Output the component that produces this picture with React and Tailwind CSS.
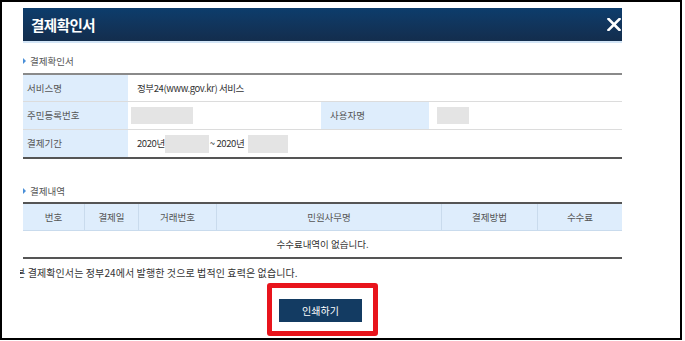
const font = { fontFamily: '"Noto Sans CJK KR", "Noto Sans", sans-serif' };

const Blur = ({ className }) => <span className={`inline-block bg-[#e4e4e4] ${className}`} />;

const SectionLabel = ({ children, className }) => (
    <div className={`flex items-center h-[14px] text-[9.5px] text-[#555] ${className}`}>
        <span className="w-0 h-0 border-y-[3px] border-y-transparent border-l-[3px] border-l-[#4a8fd8] mr-[4px]" />
        {children}
    </div>
);

const App = () => {
    const cols = ['번호', '결제일', '거래번호', '민원사무명', '결제방법', '수수료'];
    const widths = ['w-[62px]', 'w-[54px]', 'w-[78px]', 'w-[225px]', 'w-[96px]', 'flex-1'];

    return (
        <div className="w-[685px] h-[341px] bg-white" style={font}>
            <div className="w-[682px] h-[340px] border-2 border-black pl-[21px] pt-[6px]">
                <div className="w-[599px]">
                    {/* header */}
                    <div className="h-[35px] border-b-2 border-[#d3e5f6]">
                        <div className="h-[33px] flex items-center justify-between pl-[8px] pr-[1px] bg-gradient-to-b from-[#0c3d6c] to-[#132d4d]">
                            <span className="text-white text-[14.5px] font-bold tracking-[-0.5px]">결제확인서</span>
                            <svg width="14" height="13" viewBox="0 0 14 13">
                                <path d="M1.5 1 L12.5 12 M12.5 1 L1.5 12" stroke="#fff" strokeWidth="2.6" strokeLinecap="square" />
                            </svg>
                        </div>
                    </div>

                    <SectionLabel className="mt-[11px]">결제확인서</SectionLabel>

                    {/* 결제확인서 table */}
                    <div className="mt-[5px] border-t-2 border-b-2 border-t-[#8a8a8a] border-b-[#555] text-[9.5px]">
                        <div className="flex h-[27px] border-b border-[#dcdcdc]">
                            <div className="w-[105px] bg-[#deedfc] flex items-center pl-[4px] text-[#555]">서비스명</div>
                            <div className="flex-1 flex items-center pl-[9px] text-[#333] tracking-[-0.4px]">정부24(www.gov.kr) 서비스</div>
                        </div>
                        <div className="flex h-[28px] border-b border-[#dcdcdc]">
                            <div className="w-[105px] bg-[#deedfc] flex items-center pl-[4px] text-[#555]">주민등록번호</div>
                            <div className="w-[193px] flex items-center pl-[3px]">
                                <Blur className="w-[62px] h-[17px]" />
                            </div>
                            <div className="w-[108px] bg-[#deedfc] flex items-center pl-[9px] text-[#555]">사용자명</div>
                            <div className="flex-1 flex items-center pl-[8px]">
                                <Blur className="w-[32px] h-[17px]" />
                            </div>
                        </div>
                        <div className="flex h-[27px]">
                            <div className="w-[105px] bg-[#deedfc] flex items-center pl-[4px] text-[#555]">결제기간</div>
                            <div className="flex-1 flex items-center pl-[9px] text-[#333] tracking-[-0.4px]">
                                <span>2020년</span>
                                <Blur className="w-[44px] h-[18px]" />
                                <span className="ml-[1px]">~ 2020년</span>
                                <Blur className="w-[40px] h-[18px] ml-[4px]" />
                            </div>
                        </div>
                    </div>

                    <SectionLabel className="mt-[25px]">결제내역</SectionLabel>

                    {/* 결제내역 table */}
                    <div className="mt-[4px] border-t-2 border-b-2 border-t-[#555] border-b-[#555] text-[9.5px]">
                        <div className="flex h-[27px] bg-[#deedfc] border-b border-[#c9dbed] text-[#555]">
                            {cols.map((c, i) => (
                                <div
                                    key={c}
                                    className={`${widths[i]} flex items-center justify-center ${i < cols.length - 1 ? 'border-r border-[#c9dbed]' : ''}`}
                                >
                                    {c}
                                </div>
                            ))}
                        </div>
                        <div className="h-[26px] flex items-center justify-center text-[#333]">수수료내역이 없습니다.</div>
                    </div>

                    <div className="mt-[7px] -ml-[3px] overflow-hidden h-[14px]">
                        <p className="-ml-[4px] text-[10px] text-[#333] whitespace-nowrap leading-[14px] tracking-[0.1px]">
                            본 결제확인서는 정부24에서 발행한 것으로 법적인 효력은 없습니다.
                        </p>
                    </div>

                    {/* print button */}
                    <div className="flex justify-center mt-[3px]">
                        <div className="border-[5px] border-[#e8141c] rounded-[3px] pl-[7px] pr-[11px] pt-[8px] pb-[9px]">
                            <button className="w-[83px] h-[23px] bg-[#133b62] text-white text-[10px]">인쇄하기</button>
                        </div>
                    </div>
                </div>
            </div>
        </div>
    );
};

export default App;
